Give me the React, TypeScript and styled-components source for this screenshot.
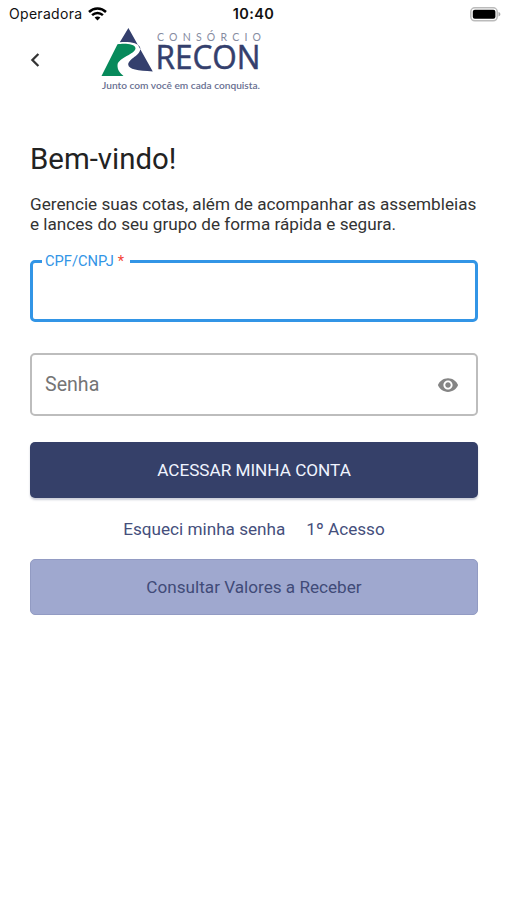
import React from "react";
import styled, { createGlobalStyle } from "styled-components";

const GlobalStyle = createGlobalStyle`
  * { box-sizing: border-box; }
  body { margin: 0; background: #fff; font-family: Roboto, "Liberation Sans", sans-serif; }
`;

const Screen = styled.div`
  width: 507px;
  height: 900px;
  background: #fff;
  overflow: hidden;
`;

const StatusBar = styled.div`
  height: 26px;
  padding: 2px 6px 0 9px;
  display: grid;
  grid-template-columns: 1fr auto 1fr;
  align-items: center;
  font-family: Inter, sans-serif;
  font-size: 14px;
  line-height: 24px;
  color: #111;
`;

const Carrier = styled.div`
  display: flex;
  align-items: center;
  gap: 6px;
  letter-spacing: 0.3px;
`;

const Clock = styled.div`
  font-size: 14.5px;
  font-weight: 600;
  letter-spacing: 0.4px;
  margin-right: 3px;
`;

const Battery = styled.div`
  display: flex;
  justify-content: flex-end;
`;

const Header = styled.header`
  display: flex;
  height: 68px;
`;

const BackButton = styled.button`
  width: 70px;
  height: 67px;
  padding: 0;
  border: 0;
  background: none;
  display: grid;
  place-items: center;
`;

const LogoSlot = styled.div`
  margin-left: 30px;
  width: 164px;
  height: 68px;

  svg {
    display: block;
    overflow: visible;
  }
`;

const Content = styled.main`
  padding: 47px 29px 0 30px;
  display: flex;
  flex-direction: column;
`;

const Title = styled.h1`
  margin: 0;
  font-size: 29.4px;
  line-height: 36px;
  font-weight: 400;
  color: #222;
`;

const Intro = styled.p`
  margin: 17px 0 0;
  font-size: 17.15px;
  line-height: 20px;
  white-space: nowrap;
  color: #333;
`;

const Field = styled.fieldset<{ $active?: boolean }>`
  margin: 0;
  min-width: 0;
  height: ${(p) => (p.$active ? 70 : 63)}px;
  padding: 0 17px 0 ${(p) => (p.$active ? 9 : 13)}px;
  border: ${(p) => (p.$active ? "3px solid #3295e6" : "2px solid #bdbdbd")};
  border-radius: 5px;
`;

const FieldRow = styled.div`
  height: 59px;
  display: flex;
  align-items: center;
  justify-content: space-between;
`;

const Legend = styled.legend`
  padding: 0 6px 0 3px;
  font-size: 14.7px;
  line-height: 18px;
  color: #3295e6;
`;

const Required = styled.span`
  color: #f44336;
`;

const Placeholder = styled.span`
  font-size: 19.6px;
  line-height: 24px;
  color: #757575;
`;

const Gap = styled.div<{ $size: number }>`
  height: ${(p) => p.$size}px;
`;

const Button = styled.button<{ $soft?: boolean }>`
  height: 56px;
  padding: 0;
  border: ${(p) => (p.$soft ? "1px solid #929bc3" : "0")};
  border-radius: 5px;
  background: ${(p) => (p.$soft ? "#9fa8cf" : "#354069")};
  color: ${(p) => (p.$soft ? "#414b78" : "#f0f4ff")};
  font-family: inherit;
  font-size: 17.15px;
  line-height: 24px;
  box-shadow: ${(p) => (p.$soft ? "none" : "0 2px 2px rgba(53, 64, 105, 0.25)")};
`;

const Links = styled.nav`
  height: 61px;
  display: flex;
  justify-content: center;
  align-items: center;
  gap: 21px;
`;

const TextLink = styled.a`
  font-size: 17.15px;
  line-height: 24px;
  color: #454f7c;
`;

const WifiIcon = () => (
  <svg width="19" height="14" viewBox="0 0 19 14" fill="none" stroke="#000" strokeWidth="2.5">
    <path d="M1 5C5.800 .4 13.200 .4 18 5" />
    <path d="M4.100 8.200C7.200 5.300 11.800 5.300 14.900 8.200" />
    <path d="M9.500 13.400 6.600 10.500C8.200 9 10.800 9 12.400 10.500Z" fill="#000" stroke="none" />
  </svg>
);

const BatteryIcon = () => (
  <svg width="31" height="15" viewBox="0 0 31 15">
    <rect x=".8" y=".8" width="26.400" height="13" rx="4" fill="#fff" stroke="#bbb" strokeWidth="1.500" />
    <rect x="2.800" y="2.800" width="22.600" height="9" rx="2" fill="#000" />
    <path d="M28.500 5.100C31 5.800 31 8.800 28.500 9.500Z" fill="#aaa" />
  </svg>
);

const BackIcon = () => (
  <svg width="12" height="16" viewBox="0 0 12 16" fill="none" stroke="#333" strokeWidth="2.300">
    <path d="M9.400 2 3.400 8l6 6" />
  </svg>
);

const EyeIcon = () => (
  <svg width="22" height="22" viewBox="0 0 24 24" fill="#858585">
    <path d="M12 4.5C7 4.5 2.73 7.61 1 12c1.73 4.39 6 7.5 11 7.5s9.27-3.11 11-7.5c-1.73-4.39-6-7.5-11-7.5zM12 17c-2.76 0-5-2.24-5-5s2.24-5 5-5 5 2.24 5 5-2.24 5-5 5zm0-8c-1.66 0-3 1.34-3 3s1.34 3 3 3 3-1.34 3-3-1.34-3-3-3z" />
  </svg>
);

const Logo = () => (
  <svg width="164" height="68" viewBox="100 26 164 68">
    <path d="M128.4 28 119.8 42.2C128 41.3 139 42.500 140.300 48C141 55.500 128.500 58.500 128.200 64.500C128.500 69.500 138 70.500 152.800 71.500Z" fill="#343f6d" />
    <path d="M117.500 44.300C123 43.300 135 43.300 135.500 48.300C135 54.500 118.500 57.500 117.500 65C117.300 70 120 73 123.500 76H101.500Z" fill="#078a5b" />
    <text x="157" y="40.700" textLength="104" fontFamily="Lato" fontSize="10.500" fill="#858b9f">CONSÓRCIO</text>
    <text x="155.500" y="69" textLength="105" lengthAdjust="spacingAndGlyphs" fontFamily="Open Sans" fontSize="33.500" fontWeight="500" fill="#343f6d" stroke="#343f6d" strokeWidth=".5">RECON</text>
    <text x="102" y="88.500" textLength="158" lengthAdjust="spacingAndGlyphs" fontFamily="Lato" fontSize="10" fontWeight="600" fill="#686f91">Junto com você em cada conquista.</text>
  </svg>
);

export default function App() {
  return (
    <Screen>
      <GlobalStyle />
      <StatusBar>
        <Carrier>
          Operadora
          <WifiIcon />
        </Carrier>
        <Clock>10:40</Clock>
        <Battery>
          <BatteryIcon />
        </Battery>
      </StatusBar>
      <Header>
        <BackButton aria-label="Voltar">
          <BackIcon />
        </BackButton>
        <LogoSlot>
          <Logo />
        </LogoSlot>
      </Header>
      <Content>
        <Title>Bem-vindo!</Title>
        <Intro>
          Gerencie suas cotas, além de acompanhar as assembleias
          <br />e lances do seu grupo de forma rápida e segura.
        </Intro>
        <Gap $size={18} />
        <Field $active>
          <Legend>
            CPF/CNPJ <Required>*</Required>
          </Legend>
        </Field>
        <Gap $size={31} />
        <Field>
          <FieldRow>
            <Placeholder>Senha</Placeholder>
            <EyeIcon />
          </FieldRow>
        </Field>
        <Gap $size={26} />
        <Button>ACESSAR MINHA CONTA</Button>
        <Links>
          <TextLink>Esqueci minha senha</TextLink>
          <TextLink>1º Acesso</TextLink>
        </Links>
        <Button $soft>Consultar Valores a Receber</Button>
      </Content>
    </Screen>
  );
}
